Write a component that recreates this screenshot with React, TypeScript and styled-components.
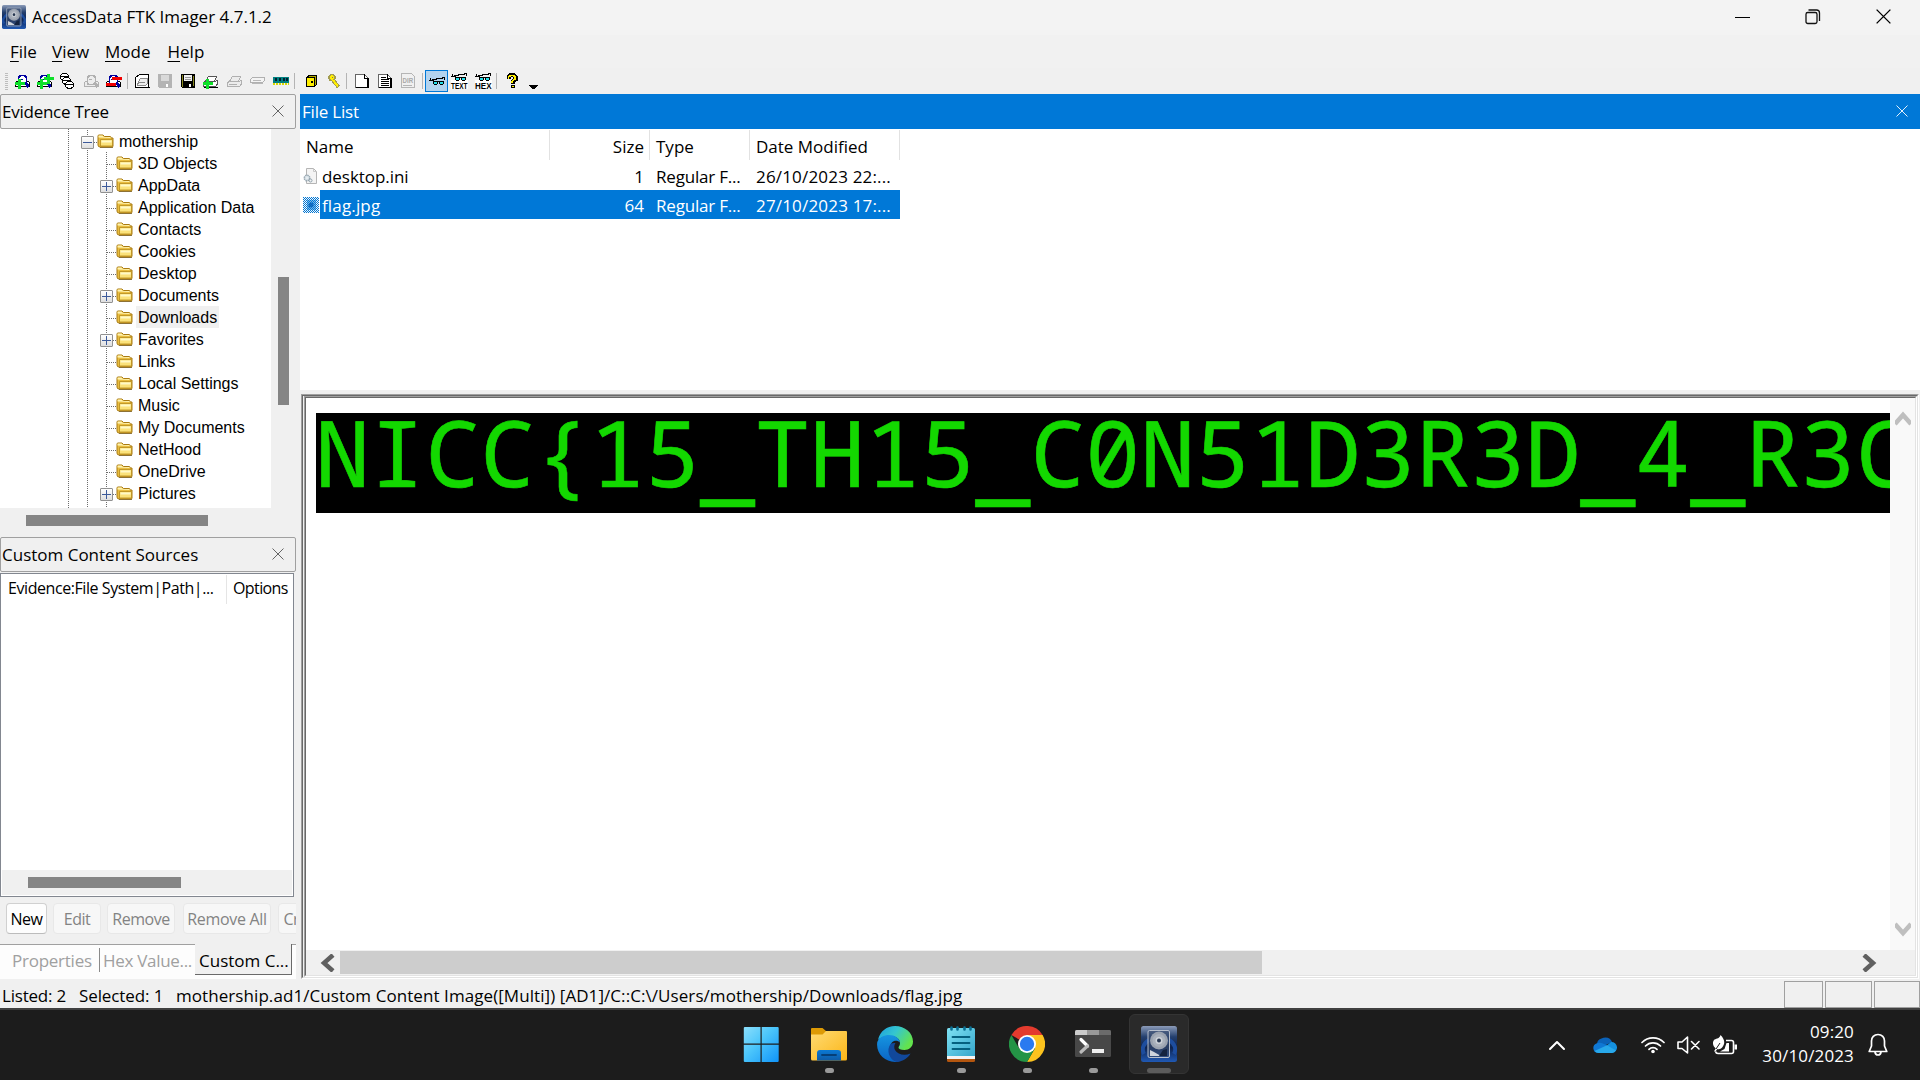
import React from 'react';
import styled, { createGlobalStyle, css } from 'styled-components';

const GlobalStyle = createGlobalStyle`
  * { box-sizing: border-box; }
  body { margin: 0; background: #f0f0f0; overflow: hidden; }
  svg { display: block; flex: none; }
`;

const ui = '"Open Sans", "Noto Sans", sans-serif';

/* ---------- window frame ---------- */

const Window = styled.div`
  width: 1920px;
  height: 1080px;
  display: flex;
  flex-direction: column;
  overflow: hidden;
  background: #f0f0f0;
  color: #000;
  font: 17px/22px ${ui};
  white-space: pre;
`;
const TitleBar = styled.header`
  height: 35px;
  flex: none;
  display: flex;
  align-items: center;
  padding: 0 2px 1px 2px;
  background: #f3f3f3;
`;
const Title = styled.span`
  flex: 1;
  margin-left: 6px;
`;
const Caption = styled.span`
  width: 70px;
  display: flex;
  justify-content: center;
  padding-bottom: 1px;
`;
const MenuBar = styled.nav`
  height: 33px;
  flex: none;
  display: flex;
  align-items: center;
  gap: 15.5px;
  padding: 0 0 0 10px;
  background: #f1f1f1;
`;
const MenuItem = styled.div<{ $w: number }>`
  width: ${p => p.$w}px;
  &::first-letter { text-decoration: underline; text-decoration-thickness: 1px; text-underline-offset: 3px; }
`;
const ToolBar = styled.div`
  height: 26px;
  flex: none;
  display: flex;
  align-items: center;
  padding-left: 5px;
`;
const Grip = styled.span`
  width: 3px;
  height: 17px;
  margin-right: 3px;
  background: repeating-linear-gradient(#bdbdbd 0 1px, #f0f0f0 1px 2px);
`;
const Tool = styled.span<{ $active?: boolean; $w?: number }>`
  width: ${p => p.$w ?? 23}px;
  height: 22px;
  display: flex;
  align-items: center;
  justify-content: center;
  padding-right: 2px;
  ${p => p.$active && css`padding: 0; background: #b3d3ee; border: 1px solid #0078d7;`}
`;
const Separator = styled.span<{ $before: number; $after: number }>`
  width: 1px;
  height: 16px;
  margin: 0 ${p => p.$after}px 0 ${p => p.$before}px;
  background: #b4b4b4;
`;

const Body = styled.main`
  height: 885px;
  flex: none;
  display: flex;
  gap: 4px;
`;
const SideColumn = styled.aside`
  width: 296px;
  flex: none;
  display: flex;
  flex-direction: column;
`;
const MainColumn = styled.section`
  flex: 1;
  min-width: 0;
  display: flex;
  flex-direction: column;
`;
const PaneHeader = styled.div<{ $active?: boolean; $gap?: number }>`
  height: 35px;
  flex: none;
  display: flex;
  align-items: center;
  justify-content: space-between;
  padding: ${p => (p.$active ? 1 : 1)}px ${p => (p.$active ? 12 : 11)}px 0 ${p => (p.$active ? 2 : 1)}px;
  margin-bottom: ${p => p.$gap ?? 0}px;
  border: ${p => (p.$active ? 'none' : '1px solid #a0a0a0')};
  border-radius: ${p => (p.$active ? 0 : 2)}px;
  background: ${p => (p.$active ? '#0078d7' : '#f0f0f0')};
  color: ${p => (p.$active ? '#fff' : '#000')};
  & > svg { margin-bottom: 2px; }
`;
const PaneTitle = styled.span<{ $track?: number }>`
  letter-spacing: ${p => p.$track ?? 0}px;
`;

/* ---------- evidence tree ---------- */

const TreePane = styled.div`
  height: 379px;
  flex: none;
  display: flex;
`;
const Tree = styled.div`
  width: 271px;
  height: 379px;
  display: flex;
  background: #fff;
  overflow: hidden;
  font: 16px/22px "Liberation Sans", Arial, sans-serif;
`;
const dots = 'repeating-linear-gradient(#6d6d6d 0 1px, transparent 1px 2px)';
const Guide = styled.span<{ $w: number }>`
  width: ${p => p.$w}px;
  flex: none;
  background: ${dots} right / 1px 100% no-repeat;
`;
const TreeItems = styled.div`
  flex: 1;
  padding-top: 1px;
`;
const TreeRow = styled.div<{ $root?: boolean }>`
  height: 22px;
  display: flex;
  align-items: center;
  padding-left: ${p => (p.$root ? 12 : 31)}px;
  background: ${dots} 18px 0 / 1px 100% no-repeat, ${p => (p.$root ? 'none' : dots)} 37px 0 / 1px 100% no-repeat;
`;
const TreeTail = styled(TreeRow)`
  height: 6px;
`;
const Expander = styled.span<{ $open?: boolean; $hidden?: boolean }>`
  width: 13px;
  height: 13px;
  margin-top: 3px;
  flex: none;
  ${p => !p.$hidden && css`
    border: 1px solid #919191;
    border-radius: 1px;
    background:
      linear-gradient(#3c5a9a, #3c5a9a) center / 9px 1px no-repeat,
      linear-gradient(#3c5a9a, #3c5a9a) center / 1px ${p.$open ? 1 : 9}px no-repeat,
      linear-gradient(#fff, #dedede);
  `}
`;
const Branch = styled.span<{ $long?: boolean }>`
  width: ${p => (p.$long ? 9 : 3)}px;
  height: 1px;
  margin-top: 2px;
  margin-left: ${p => (p.$long ? -6 : 0)}px;
  flex: none;
  background: repeating-linear-gradient(90deg, #6d6d6d 0 1px, transparent 1px 2px);
`;
const TreeLabel = styled.span<{ $selected?: boolean }>`
  height: 22px;
  margin-left: 3px;
  padding: 0 2px;
  line-height: 24px;
  background: ${p => (p.$selected ? '#f0f0f0' : 'transparent')};
`;
const SideVScroll = styled.div`
  width: 25px;
  padding: 148px 0 0 7px;
`;
const Thumb = styled.div<{ $w: number; $h: number; $light?: boolean }>`
  width: ${p => p.$w}px;
  height: ${p => p.$h}px;
  flex: none;
  background: ${p => (p.$light ? '#cdcdcd' : '#858585')};
`;
const SideHScroll = styled.div`
  height: 29px;
  flex: none;
  padding: 7px 0 0 26px;
`;

/* ---------- custom content sources ---------- */

const SourceList = styled.div`
  width: 294px;
  height: 324px;
  flex: none;
  display: flex;
  flex-direction: column;
  justify-content: space-between;
  padding: 1px;
  border: 1px solid #828790;
  background: #fff;
  font-size: 16px;
`;
const SourceHead = styled.div`
  height: 29px;
  display: grid;
  grid-template-columns: 224px 1fr;
  line-height: 26px;
`;
const SourceCol = styled.span<{ $track?: number }>`
  padding-left: 6px;
  letter-spacing: ${p => p.$track ?? 0}px;
  & + & { border-left: 1px solid #e5e5e5; }
`;
const SourceScroll = styled.div`
  height: 25px;
  padding: 7px 0 0 26px;
  background: #f0f0f0;
`;
const ButtonRow = styled.div`
  height: 47px;
  flex: none;
  display: flex;
  padding: 6px 0 0 6px;
  overflow: hidden;
  font-size: 16px;
`;
const PushButton = styled.button<{ $w: number; $gap: number; $track?: number }>`
  width: ${p => p.$w}px;
  height: 31px;
  flex: none;
  margin: 0 ${p => p.$gap}px 0 0;
  padding: 0;
  border: 1px solid #d0d0d0;
  border-bottom-color: #bcbcbc;
  border-radius: 4px;
  background: #fdfdfd;
  color: #000;
  font: inherit;
  letter-spacing: ${p => p.$track ?? -0.5}px;
  &:disabled { color: #838383; background: #f7f7f7; border-color: #e8e8e8; }
`;
const Tabs = styled.div`
  height: 35px;
  flex: none;
  display: flex;
  background: #fdfdfd;
  border-top: 1px solid #a0a0a0;
`;
const Tab = styled.span<{ $w: number; $selected?: boolean; $track?: number; $pad: number }>`
  width: ${p => p.$w}px;
  height: 30px;
  flex: none;
  padding-left: ${p => p.$pad}px;
  line-height: 32px;
  color: #a0a0a0;
  letter-spacing: ${p => p.$track ?? 0}px;
  background: linear-gradient(#8a8a8a, #8a8a8a) right 3px / 1px 24px no-repeat;
  & + & { background: none; }
  ${p => p.$selected && css`
    && { color: #000; background: #f0f0f0; height: 31px; margin-top: -1px; line-height: 34px; border: solid #696969; border-width: 0 1px 1px 0; }
  `}
`;

/* ---------- file list ---------- */

const FileTable = styled.div`
  height: 261px;
  flex: none;
  background: #fff;
  padding-top: 1px;
`;
const FileRow = styled.div<{ $head?: boolean; $selected?: boolean }>`
  width: 600px;
  height: ${p => (p.$head ? 31 : 29)}px;
  display: grid;
  grid-template-columns: 250px 100px 100px 150px;
  line-height: ${p => (p.$head ? 34 : 30)}px;
  color: ${p => (p.$selected ? '#fff' : '#000')};
  background: ${p => (p.$selected ? 'linear-gradient(#0078d7, #0078d7) 20px 0 no-repeat' : 'none')};
`;
const HeadCell = styled.span<{ $right?: boolean }>`
  padding: 0 6px;
  text-align: ${p => (p.$right ? 'right' : 'left')};
  background: linear-gradient(#e2e2e2, #e2e2e2) right 0 / 1px 30px no-repeat;
`;
const Cell = styled.span<{ $right?: boolean; $track?: number }>`
  display: flex;
  align-items: center;
  justify-content: ${p => (p.$right ? 'flex-end' : 'flex-start')};
  padding: 1px 6px 0;
  letter-spacing: ${p => p.$track ?? 0}px;
`;
const FileCell = styled(Cell)`
  gap: 3px;
  padding-left: 3px;
  & > svg { margin-bottom: 2px; }
`;

/* ---------- viewer ---------- */

const ViewerFrame = styled.div`
  flex: none;
  height: 585px;
  margin: 4px 1px 0 1px;
  border: 1px solid;
  border-color: #a0a0a0 #fff #fff #a0a0a0;
`;
const FrameInner = styled.div`
  height: 100%;
  border: 1px solid;
  border-color: #696969 #e3e3e3 #e3e3e3 #696969;
  padding-left: 1px;
`;
const FrameCore = styled.div`
  height: 100%;
  border: 1px solid;
  border-color: #a0a0a0 #fff #fff #a0a0a0;
`;
const Viewer = styled.div`
  height: 100%;
  border: 1px solid;
  border-color: #696969 #e3e3e3 #e3e3e3 #696969;
  display: flex;
  flex-direction: column;
  background: #fff;
`;
const ViewerMain = styled.div`
  flex: 1;
  min-height: 0;
  display: flex;
`;
const Canvas = styled.div`
  flex: 1;
  min-width: 0;
  padding: 15px 0 0 10px;
`;
const Picture = styled.div`
  height: 100px;
  overflow: hidden;
  background: #000;
  color: #13d800;
  font: 400 91.7px/78px "Noto Sans Mono", "DejaVu Sans Mono", monospace;
  text-indent: -1px;
  -webkit-text-stroke: 0.6px #13d800;
`;
const LowLine = styled.span`
  line-height: 0;
  vertical-align: -6px;
`;
const ViewerVScroll = styled.div`
  width: 25px;
  flex: none;
  display: flex;
  flex-direction: column;
  justify-content: space-between;
  align-items: center;
  padding: 12px 0;
  background: #f9f9f9;
`;
const ViewerHScroll = styled.div`
  height: 25px;
  flex: none;
  display: flex;
  align-items: center;
  padding: 0 38px 0 14px;
  background: #f0f0f0;
`;
const Spacer = styled.span`
  flex: 1;
`;
const ArrowSlot = styled.span`
  width: 20px;
  flex: none;
`;

/* ---------- status bar ---------- */

const StatusBar = styled.footer`
  height: 29px;
  flex: none;
  display: flex;
  gap: 2px;
  padding: 2px 0 0 2px;
  line-height: 29px;
`;
const StatusText = styled.span<{ $w?: number; $track?: number }>`
  ${p => (p.$w ? css`width: ${p.$w}px;` : css`flex: 1;`)}
  letter-spacing: ${p => p.$track ?? 0}px;
`;
const StatusCell = styled.span<{ $w: number }>`
  width: ${p => p.$w}px;
  height: 27px;
  border: 1px solid #a0a0a0;
`;

/* ---------- taskbar ---------- */

const TaskBar = styled.div`
  height: 72px;
  flex: none;
  display: flex;
  border-top: 2px solid #404040;
  background: #1c1c1c;
  color: #fff;
`;
const Apps = styled.div`
  display: flex;
  padding-left: 728px;
  width: 1548px;
`;
const AppSlot = styled.div<{ $shift?: boolean }>`
  width: 66px;
  height: 70px;
  padding: 4px 3px;
  margin-right: ${p => (p.$shift ? 2 : 0)}px;
`;
const Tile = styled.div<{ $focused?: boolean }>`
  height: 60px;
  display: flex;
  flex-direction: column;
  align-items: center;
  justify-content: space-between;
  padding-top: ${p => (p.$focused ? 11 : 12)}px;
  border-radius: 6px;
  ${p => p.$focused && css`background: #2a2a2a; border: 1px solid #343434;`}
`;
const Indicator = styled.span<{ $w: number; $dim?: boolean }>`
  width: ${p => p.$w}px;
  height: 5px;
  margin-bottom: ${p => (p.$dim ? 0 : 1)}px;
  border-radius: 3px;
  background: ${p => (p.$dim ? '#5c5c5c' : '#9a9a9a')};
`;
const Tray = styled.div`
  flex: 1;
  display: flex;
  align-items: center;
`;
const TrayIcon = styled.span<{ $gap: number }>`
  margin-right: ${p => p.$gap}px;
`;
const Clock = styled.div`
  width: 117px;
  margin: 0 14px 2px 0;
  text-align: right;
  line-height: 24px;
  letter-spacing: 0.15px;
`;

/* ---------- icons ---------- */

const Disk = ({ size }: { size: number }) => (
  <svg width={size} height={size} viewBox="0 0 36 36">
    <defs>
      <linearGradient id={`ftk${size}`} x1="0" y1="0" x2="0" y2="1">
        <stop offset="0" stopColor="#8b9bb8" /><stop offset=".3" stopColor="#24406f" />
        <stop offset=".6" stopColor="#0d2350" /><stop offset="1" stopColor="#2059b4" />
      </linearGradient>
    </defs>
    <rect width="36" height="36" rx="2.500" fill={`url(#ftk${size})`} />
    <path d="M3 28a16 12 0 0 1 5-14M33 28a16 12 0 0 0-5-14" stroke="#1d4d9e" strokeWidth="4" fill="none" />
    <rect x="7" y="4.500" width="21.500" height="27" rx="1.500" fill="#3c4e70" fillOpacity=".6" stroke="#b7bfcc" strokeWidth="1" />
    <circle cx="18" cy="14.500" r="9" fill="#9aa2af" />
    <circle cx="18" cy="14.500" r="6.500" fill="#a9b0bb" />
    <circle cx="18" cy="14.500" r="3.500" fill="#ccd1d8" />
    <circle cx="18" cy="14.500" r="2" fill="#26364f" />
    <path d="M9 30v-6l4 2 7 4z" fill="#cfd4dc" />
    <path d="M22 24l4-1v7h-8z" fill="#14233f" />
  </svg>
);

const Cross = ({ color, size }: { color: string; size: number }) => (
  <svg width={size} height={size} viewBox="0 0 12 12"><path d="M.5.5l11 11M11.500.5l-11 11" stroke={color} strokeWidth={size > 13 ? 1.1 : 0.9} fill="none" /></svg>
);

const Folder = () => (
  <svg width="17" height="16" viewBox="0 0 17 16">
    <path d="M1 5V3q0-1 1-1h4l1.500 1.500H13q1 0 1 1V5h2v8q0 1-1 1H3q-2 0-2-2z" fill="#e9bd3f" stroke="#a97b13" />
    <path d="M1.500 4.500V3q0-.5.5-.5h3.500L7 4h6.500v1" fill="#fff3b0" />
    <path d="M3.500 13V6.500h12V13z" fill="#fbe27a" stroke="#b68a1c" strokeWidth=".8" />
    <path d="M4.500 7.500h10v2h-10z" fill="#fff9c8" />
    <path d="M3 14.500h13" stroke="#7b6021" strokeWidth=".8" />
  </svg>
);

const I = ({ children, w = 16, h = 16 }: { children: React.ReactNode; w?: number; h?: number }) => (
  <svg width={w} height={h} viewBox={`0 0 ${w} ${h}`} shapeRendering="crispEdges">{children}</svg>
);

const Magnifier = ({ line, fill = '#fff' }: { line: string; fill?: string }) => (
  <>
    <path d="M1.500 13.500V9.500l3-2h8l3 2v4z" fill={fill} stroke={line === '#b0b0b0' ? line : '#000'} />
    <path d="M4.500 10.500V4.500l2-2h4l2 2v6l-1 1h-6z" fill={fill} stroke={line} strokeWidth="1.500" />
    <path d="M11.500 9.500l3 4.500" stroke={line} strokeWidth="3" />
    <path d="M6 6h3" stroke={line} />
  </>
);
const Plus = ({ x, y }: { x: number; y: number }) => <path d={`M${x} ${y - 5}v10M${x - 5} ${y}h10`} stroke="#0ee02a" strokeWidth="3" />;

const AddEvidence = () => <I><Magnifier line="#0000a0" /><Plus x={5.5} y={10.5} /></I>;
const AddAll = () => <I w={18}><Magnifier line="#0000a0" /><Plus x={5.5} y={10.5} /><Plus x={12.5} y={5.5} /></I>;
const Mount = () => (
  <I>
    {[[0, 0], [2, 4], [5, 8]].map(([x, y]) => (
      <g key={y} fill="#fff" stroke="#000">
        <path d={`M${x + 0.5} ${y + 2.5}l2-2h4l2 2v3l-2 1.500h-4l-2-1.500z`} /><path d={`M${x + 1} ${y + 3.5}h7`} />
      </g>
    ))}
  </I>
);
const Gray = () => <I><Magnifier line="#b0b0b0" fill="#ececec" /></I>;
const RemoveEvidence = () => (
  <I w={17}><Magnifier line="#0000a0" /><path d="M1 11.500h10M7 5.500h10" stroke="#f00000" strokeWidth="3" /></I>
);
const Drive = ({ c, f }: { c: string; f: string }) => (
  <>
    <path d="M3.500 8.500l3-5h8l-2 5z" fill={f} stroke={c} />
    <path d="M1.500 9.500l2-1h10l1.500-1v4l-1.500 2h-12z" fill={f} stroke={c} />
    <path d="M3 11.500h8" stroke={c} />
  </>
);
const CreateImage = () => (
  <I><path d="M1.500 14.500V4.500l4-3h9v13z" fill="#fff" stroke="#000" /><path d="M1 14.500h15M14.500 2v13" stroke="#000" />
    <path d="M4.500 8.500l2-3h7v5l-2 2h-8z" fill="#eee" stroke="#8a8a8a" /><path d="M5 9.500h6" stroke="#8a8a8a" /></I>
);
const Floppy = ({ dark }: { dark?: boolean }) => {
  const c = dark ? '#000' : '#b4b4b4';
  return (
    <I><path d="M1 1h14v14H2l-1-1z" fill={c} />
      {dark && <path d="M2 2h1v12H2zM13 3h1v10h-1z" fill="#8a8a20" />}
      <path d="M4 2h8v6H4z" fill={dark ? '#f2f2f2' : '#d9d9d9'} />
      {dark && <path d="M5 4h6M5 6h6" stroke="#999" />}
      <path d="M9 11h2v3H9z" fill="#fff" /></I>
  );
};
const AddDrive = () => <I w={17}><Drive c="#555" f="#fff" /><path d="M2 14.500h14" stroke="#000" /><Plus x={5.5} y={10.5} /></I>;
const DriveOff = () => <I><Drive c="#b0b0b0" f="#ececec" /></I>;
const Slab = () => <I><path d="M1.500 6.500l2-2h12v3l-2 2h-12z" fill="#f4f4f4" stroke="#b0b0b0" /><path d="M3 10.500h11M4 7.500h8" stroke="#b8b8b8" /></I>;
const Memory = () => (
  <I w={16} h={8}><path d="M0 0h16v6H0z" fill="#008080" />
    <path d="M2 1h2v3H2zM6 1h2v3H6zM10 1h2v3h-2zM13 1h2v3h-2z" fill="#002030" />
    <path d="M0 7h16" stroke="#d8d800" strokeWidth="2" strokeDasharray="2 1" /></I>
);
const Safe = () => (
  <I><path d="M3 4l3-2h8v10l-3 2H3z" fill="#000" /><path d="M4.500 4l2-1H13v9l-1.500 1z" fill="#b0a800" /><path d="M3.500 4.500h8v9h-8z" fill="#ffee00" stroke="#000" /><path d="M8 8h2v2H8z" fill="#000" /></I>
);
const Key = () => (
  <I><circle cx="6" cy="4.500" r="3" fill="#ffee00" stroke="#a39d50" strokeWidth="1.500" /><path d="M5.500 4h1" stroke="#777" />
    <path d="M7 7l5.500 7" stroke="#a39d50" strokeWidth="4" /><path d="M7 7l5 6.500" stroke="#ffee00" strokeWidth="2" /></I>
);
const Page = ({ lines }: { lines?: boolean }) => (
  <I><path d="M1.500 1.500h9l4 4v9h-13z" fill="#fff" stroke="#666" strokeWidth="1" /><path d="M10.500 1v4.500h4M14 5v10M2 14.500h13" stroke="#000" strokeWidth="1.500" fill="none" />
    {lines && <path d="M4 4.500h5M4 6.500h8M4 8.500h8M4 10.500h8M4 12.500h8" stroke="#000" />}</I>
);
const DirPage = () => (
  <I><path d="M1.500.5h10l3 3v11h-13z" fill="#f0f0f0" stroke="#b5b5b5" /><path d="M3 12.500h9" stroke="#b5b5b5" />
    <text x="2.600" y="10" fontSize="7" fontWeight="700" fontFamily="Liberation Sans, sans-serif" textLength="10.500" lengthAdjust="spacingAndGlyphs" fill="#a8a8a8">DIR</text></I>
);
const Glasses = ({ label }: { label?: string }) => (
  <I w={18} h={16}>
    {label && <path d="M1 7h17v9H1z" fill="#fff" />}
    <g transform={label ? 'translate(0 -4)' : undefined}>
      <path d="M1 7.500h3l3 1M2.500 5v2M4 6.500h3l4-1h3v-1.500h2v3M8 5.500h3" stroke="#000" strokeWidth="1" fill="none" />
      <path d="M5.500 8.500h4v2l-1 1h-2l-1-1zM11.500 8.500h4v2l-1 1h-2l-1-1zM9.500 8.500h2" fill="#25dfe8" stroke="#000" />
    </g>
    {label && <text x="1" y="15.500" fontSize="8.500" fontWeight="700" fontFamily="Liberation Sans, sans-serif" textLength="16.500" lengthAdjust="spacingAndGlyphs">{label}</text>}
  </I>
);
const Question = () => (
  <I><path d="M4.500 6V4l2-2h3l2 2v2.500l-3 2v2" stroke="#000" strokeWidth="4" fill="none" /><path d="M6.500 11.500h4v3h-4z" fill="#000" />
    <path d="M4.500 5.500V4l2-1.500h3L11 4v2l-3 2.500V10" stroke="#ffee00" strokeWidth="1.700" fill="none" /><path d="M7.500 12.500h2v1.500h-2z" fill="#ffee00" /></I>
);
const MoreArrow = () => <I w={10} h={16}><path d="M0 12h10l-5 5z" fill="#000" /></I>;

const IniFile = () => (
  <svg width="16" height="17" viewBox="0 0 16 17"><path d="M3.500.5h7l3 3v12h-10z" fill="#f4f4f4" stroke="#b5b5b5" /><path d="M10.500.5v3h3" fill="none" stroke="#c9c9c9" />
    <circle cx="4" cy="10" r="2.700" fill="#e5edf2" stroke="#9aa9b3" strokeWidth="1.600" strokeDasharray="1.500 .6" /><circle cx="7.500" cy="12.500" r="1.500" fill="none" stroke="#8fa0ab" /></svg>
);
const JpgFile = () => (
  <svg width="16" height="16" viewBox="0 0 16 16">
    <defs><pattern id="dither" width="2" height="2" patternUnits="userSpaceOnUse"><path d="M0 0h1v1H0zM1 1h1v1H1z" fill="#0078d7" shapeRendering="crispEdges" /></pattern></defs>
    <path d="M0 0h16v16H0z" fill="#f4f6f8" /><path d="M4 3h9v10H4z" fill="#7db8e6" /><circle cx="8" cy="8" r="2.500" fill="#1a5fae" /><path d="M0 0h16v16H0z" fill="url(#dither)" />
  </svg>
);

const arrows = { up: 'M0 13L8 4l8 9', down: 'M0 3l8 9 8-9', left: 'M13 0L4 8l9 8', right: 'M3 0l9 8-9 8' };
const Arrow = ({ dir, light }: { dir: keyof typeof arrows; light?: boolean }) => (
  <svg width="16" height="18" viewBox="0 -1 16 18"><path d={arrows[dir]} fill="none" stroke={light ? '#bfbfbf' : '#606060'} strokeWidth="4.500" /></svg>
);

const StartLogo = () => (
  <svg width="36" height="36" viewBox="0 0 36 36">
    <defs><linearGradient id="win" gradientUnits="userSpaceOnUse" x1="0" y1="0" x2="36" y2="36"><stop offset="0" stopColor="#8fe0fb" /><stop offset=".45" stopColor="#4cc6fb" /><stop offset="1" stopColor="#0f93f8" /></linearGradient></defs>
    <path d="M1.500 1H17.500v16.500H.8V1.700zM18.700 1H35l.7.7v15.800h-17zM.8 18.800h16.700V36h-16l-.7-.7zM18.700 18.800h17V35.300l-.7.7H18.700z" fill="url(#win)" />
  </svg>
);
const Explorer = () => (
  <svg width="36" height="36" viewBox="0 0 36 36">
    <defs><linearGradient id="fo" x1="0" y1="0" x2="1" y2="1"><stop offset="0" stopColor="#ffdb73" /><stop offset="1" stopColor="#fbb517" /></linearGradient>
      <linearGradient id="fb" x1="0" y1="0" x2="0" y2="1"><stop offset="0" stopColor="#0a79d4" /><stop offset="1" stopColor="#0f5ba6" /></linearGradient></defs>
    <path d="M0 3q0-1 1-1h10.500l3.500 3h20v6H0z" fill="#dd9a05" />
    <path d="M0 8.500h11.500L15 5h20q1 0 1 1v27q0 1.500-1.500 1.500h-33Q0 34.500 0 33z" fill="url(#fo)" />
    <path d="M6 34.500V27q0-3 3-3h18q3 0 3 3v7.500z" fill="url(#fb)" /><path d="M11 29h14" stroke="#053f78" strokeWidth="1.800" strokeLinecap="round" />
  </svg>
);
const Edge = () => (
  <svg width="36" height="36" viewBox="0 0 36 36">
    <defs>
      <linearGradient id="e1" x1="0" y1="0" x2="1" y2=".5"><stop offset="0" stopColor="#1b9de0" /><stop offset=".5" stopColor="#35c6cf" /><stop offset="1" stopColor="#63e34d" /></linearGradient>
      <linearGradient id="e2" x1="0" y1="0" x2="0" y2="1"><stop offset="0" stopColor="#1695e0" /><stop offset="1" stopColor="#0a63c4" /></linearGradient>
    </defs>
    <path d="M1 14C3 5 10 0 18 0c10 0 18 7 18 15.500C36 21 32 24 27.500 24c-4 0-6-1-6-2.500 0-1 1.500-1.500 1.500-4.500 0-4-4-7-9-7C8 10 3 12 1 14z" fill="url(#e1)" />
    <path d="M.3 16C2 11.500 7 9 12 9c6 0 10.500 3.500 11 7.500-3-3-9-2-9.500 3.500-.5 8 7 12.500 14 11-3 3.500-6 5-9.500 5C7.500 36-1.500 27 .3 16z" fill="url(#e2)" />
    <path d="M13.500 18C9 24 12 34 20 36c6-.5 11-4 13.500-8.500-6 2.500-13 1-15.500-3.500-1.300-2.500-.8-5 .5-7-2 0-4 0-5 1z" fill="#11489b" />
  </svg>
);
const Notepad = () => (
  <svg width="36" height="36" viewBox="0 0 36 36">
    <defs><linearGradient id="np" x1="0" y1="0" x2="1" y2="1"><stop offset="0" stopColor="#7fe2f4" /><stop offset="1" stopColor="#35a6cb" /></linearGradient></defs>
    <path d="M4 31h28v3.500q0 1.500-1.500 1.500h-25Q4 36 4 34.500z" fill="#b4560f" /><path d="M4 29h28v4H4z" fill="#f3f3f3" />
    <path d="M4 3.500Q4 2 5.500 2h25Q32 2 32 3.500V30H4z" fill="url(#np)" />
    <path d="M9.500 11h17M9.500 17h17M9.500 23h17" stroke="#05607f" strokeWidth="1.800" strokeLinecap="round" />
    <path d="M8.500 1.500v2M14.500 1.500v2M21.500 1.500v2M27.500 1.500v2" stroke="#0b6f92" strokeWidth="2.600" strokeLinecap="round" />
  </svg>
);
const Chrome = () => (
  <svg width="36" height="36" viewBox="0 0 36 36">
    <path d="M18 18L2.400 9A18 18 0 0 1 33.600 9z" fill="#e33b2e" /><path d="M18 9h15.600A18 18 0 0 1 18 36l7.800-13.500z" fill="#fcc31e" />
    <path d="M10.200 22.500L2.400 9A18 18 0 0 0 18 36l7.800-13.500z" fill="#249446" />
    <circle cx="18" cy="18" r="9" fill="#fff" /><circle cx="18" cy="18" r="7.200" fill="#2a7af0" />
  </svg>
);
const Terminal = () => (
  <svg width="36" height="36" viewBox="0 0 36 36">
    <rect y="4" width="36" height="27" rx="1.500" fill="#484848" /><path d="M0 9V5.500Q0 4 1.500 4H12v5z" fill="#ccc" /><path d="M12 4h12v5H12z" fill="#999" /><path d="M24 4h10.500Q36 4 36 5.500V9H24z" fill="#6b6b6b" />
    <path d="M6 13.500l6.500 6.500" stroke="#fff" strokeWidth="3.200" strokeLinecap="round" /><path d="M12.500 20L6 26" stroke="#bbb" strokeWidth="3.200" strokeLinecap="round" />
    <path d="M17 23h12v4H17z" fill="#f0f0f0" />
  </svg>
);

const Hidden = () => <svg width="18" height="12" viewBox="0 0 18 12"><path d="M2 10l7-7 7 7" stroke="#fff" strokeWidth="2" fill="none" strokeLinecap="round" strokeLinejoin="round" /></svg>;
const OneDrive = () => (
  <svg width="24" height="16" viewBox="0 0 24 16"><path d="M4 7a6 6 0 0 1 4.500-5.500C13-1 18 1 19 5L11 9z" fill="#0b62b8" /><path d="M5 16a5 5 0 0 1-1-9.800C8 5 11 7 14 8.500L8 16z" fill="#0f78d4" /><path d="M18 5a5.500 5.500 0 0 1 1 11l-7-6z" fill="#1490df" /><path d="M1.500 14L14 8.300l9 5.200A5 5 0 0 1 19 16H5.500Q3 16 1.500 14z" fill="#28a8ea" /></svg>
);
const Wifi = () => (
  <svg width="24" height="18" viewBox="0 0 24 18" fill="none" stroke="#fff" strokeWidth="1.700" strokeLinecap="round"><path d="M1 6.500a15.500 15.500 0 0 1 22 0M4.500 10a10.600 10.600 0 0 1 15 0M8 13.300a5.700 5.700 0 0 1 8 0" /><circle cx="12" cy="15.500" r="1.500" fill="#fff" stroke="none" /><circle cx="12" cy="15.500" r=".8" /></svg>
);
const Muted = () => (
  <svg width="24" height="18" viewBox="0 0 24 18" fill="none" stroke="#fff" strokeWidth="1.600" strokeLinejoin="round" strokeLinecap="round"><path d="M1 6h4l5.500-5v16L5 12.500H1zM14.500 5.500l7.500 7.500M22 5.500L14.500 13" /></svg>
);
const Battery = () => (
  <svg width="24" height="21" viewBox="0 0 24 21"><path d="M13 5.500h5.500q2 0 2 2v9q0 2-2 2H5q-2 0-2.500-2" fill="none" stroke="#fff" strokeWidth="1.600" /><path d="M21.500 9.500H24v5h-2.500z" fill="#fff" /><path d="M13.500 8H16v8.500H7l4.500-2.500z" fill="#fff" />
    <path d="M7.500 0c4 4 5 8 2 12-1.500 2-3.500 2.500-5 2L2 17l-.8-1 1.500-2.500C-1 10-.5 6 1.500 4.500 4 3.500 6.500 3.500 7.500 0z" fill="#fff" /><path d="M3 14l4-6" stroke="#1c1c1c" /></svg>
);
const Bell = () => (
  <svg width="20" height="24" viewBox="0 0 20 24" fill="none" stroke="#fff" strokeWidth="1.700" strokeLinejoin="round"><path d="M10 1.500c-4 0-6.500 3-6.500 6.500v5L1.200 18.500h17.600L16.500 13V8c0-3.500-2.500-6.500-6.500-6.500zM7 19c.3 2 1.500 3 3 3s2.700-1 3-3" /></svg>
);

/* ---------- data ---------- */

const folders: [string, boolean?][] = [
  ['3D Objects'], ['AppData', true], ['Application Data'], ['Contacts'], ['Cookies'], ['Desktop'],
  ['Documents', true], ['Downloads'], ['Favorites', true], ['Links'], ['Local Settings'], ['Music'],
  ['My Documents'], ['NetHood'], ['OneDrive'], ['Pictures', true],
];
const files = [
  { icon: <IniFile />, name: 'desktop.ini', size: '1', type: 'Regular F...', date: '26/10/2023 22:...', track: -0.05 },
  { icon: <JpgFile />, name: 'flag.jpg', size: '64', type: 'Regular F...', date: '27/10/2023 17:...', track: 0.15 },
];
const apps: { icon: React.ReactNode; bar?: number; focused?: boolean }[] = [
  { icon: <StartLogo /> }, { icon: <Explorer />, bar: 9 }, { icon: <Edge /> }, { icon: <Notepad />, bar: 9 },
  { icon: <Chrome />, bar: 9 }, { icon: <Terminal />, bar: 9 }, { icon: <Disk size={36} />, bar: 24, focused: true },
];
const flagText = 'NICC{15_TH15_C0N51D3R3D_4_R3C';

export default function App() {
  return (
    <Window>
      <GlobalStyle />
      <TitleBar>
        <Disk size={24} />
        <Title>AccessData FTK Imager 4.7.1.2</Title>
        <Caption><svg width="16" height="16"><path d="M0 8.500h15" stroke="#000" /></svg></Caption>
        <Caption>
          <svg width="16" height="16" viewBox="0 0 16 16" fill="none" stroke="#111" strokeWidth="1.300"><rect x="1" y="3.500" width="11" height="11" rx="1.800" /><path d="M3.500 1h8q3 0 3 3v8" /></svg>
        </Caption>
        <Caption><Cross color="#000" size={15} /></Caption>
      </TitleBar>
      <MenuBar>
        <MenuItem $w={26.5}>File</MenuItem>
        <MenuItem $w={37.5}>View</MenuItem>
        <MenuItem $w={47}>Mode</MenuItem>
        <MenuItem $w={37}>Help</MenuItem>
      </MenuBar>
      <ToolBar>
        <Grip />
        <Tool><AddEvidence /></Tool><Tool><AddAll /></Tool><Tool><Mount /></Tool><Tool><Gray /></Tool><Tool><RemoveEvidence /></Tool>
        <Separator $before={1} $after={3} />
        <Tool><CreateImage /></Tool><Tool><Floppy /></Tool><Tool><Floppy dark /></Tool><Tool><AddDrive /></Tool><Tool><DriveOff /></Tool><Tool><Slab /></Tool><Tool $w={25}><Memory /></Tool>
        <Separator $before={0} $after={5} />
        <Tool><Safe /></Tool><Tool><Key /></Tool>
        <Separator $before={0} $after={4} />
        <Tool><Page /></Tool><Tool><Page lines /></Tool><Tool><DirPage /></Tool>
        <Separator $before={2} $after={2} />
        <Tool $active><Glasses /></Tool><Tool $w={24}><Glasses label="TEXT" /></Tool><Tool><Glasses label="HEX" /></Tool>
        <Separator $before={1} $after={4} />
        <Tool><Question /></Tool><Tool $w={19}><MoreArrow /></Tool>
      </ToolBar>

      <Body>
        <SideColumn>
          <PaneHeader><PaneTitle $track={-0.25}>Evidence Tree</PaneTitle><Cross color="#555" size={12} /></PaneHeader>
          <TreePane>
            <Tree>
              <Guide $w={69} />
              <TreeItems>
                <TreeRow $root><Expander $open /><Branch /><Folder /><TreeLabel>mothership</TreeLabel></TreeRow>
                {folders.map(([name, expandable]) => (
                  <TreeRow key={name}>
                    <Expander $hidden={!expandable} /><Branch $long={!expandable} /><Folder />
                    <TreeLabel $selected={name === 'Downloads'}>{name}</TreeLabel>
                  </TreeRow>
                ))}
                <TreeTail />
              </TreeItems>
            </Tree>
            <SideVScroll><Thumb $w={11} $h={128} /></SideVScroll>
          </TreePane>
          <SideHScroll><Thumb $w={182} $h={11} /></SideHScroll>
          <PaneHeader $gap={1}><PaneTitle>Custom Content Sources</PaneTitle><Cross color="#555" size={12} /></PaneHeader>
          <SourceList>
            <SourceHead><SourceCol $track={-0.43}>Evidence:File System|Path|...</SourceCol><SourceCol $track={-0.6}>Options</SourceCol></SourceHead>
            <SourceScroll><Thumb $w={153} $h={11} /></SourceScroll>
          </SourceList>
          <ButtonRow>
            <PushButton $w={41} $gap={6}>New</PushButton>
            <PushButton disabled $w={48} $gap={6}>Edit</PushButton>
            <PushButton disabled $w={68} $gap={8}>Remove</PushButton>
            <PushButton disabled $w={88} $gap={7} $track={-0.3}>Remove All</PushButton>
            <PushButton disabled $w={57} $gap={0}>Create</PushButton>
          </ButtonRow>
          <Tabs>
            <Tab $w={100} $pad={12} $track={-0.25}>Properties</Tab>
            <Tab $w={95} $pad={3} $track={-0.3}>Hex Value...</Tab>
            <Tab $w={97} $pad={4} $selected>Custom C...</Tab>
          </Tabs>
        </SideColumn>

        <MainColumn>
          <PaneHeader $active><PaneTitle $track={-0.2}>File List</PaneTitle><Cross color="#fff" size={12} /></PaneHeader>
          <FileTable>
            <FileRow $head><HeadCell>Name</HeadCell><HeadCell $right>Size</HeadCell><HeadCell>Type</HeadCell><HeadCell>Date Modified</HeadCell></FileRow>
            {files.map(f => (
              <FileRow key={f.name} $selected={f.name === 'flag.jpg'}>
                <FileCell $track={f.track}>{f.icon}{f.name}</FileCell>
                <Cell $right>{f.size}</Cell>
                <Cell $track={-0.2}>{f.type}</Cell>
                <Cell $track={0.18}>{f.date}</Cell>
              </FileRow>
            ))}
          </FileTable>
          <ViewerFrame><FrameInner><FrameCore>
            <Viewer>
              <ViewerMain>
                <Canvas>
                  <Picture>
                    {flagText.split(/(_)/).map((part, i) => (part === '_' ? <LowLine key={i}>_</LowLine> : part))}
                  </Picture>
                </Canvas>
                <ViewerVScroll><Arrow dir="up" light /><Arrow dir="down" light /></ViewerVScroll>
              </ViewerMain>
              <ViewerHScroll>
                <ArrowSlot><Arrow dir="left" /></ArrowSlot>
                <Thumb $w={922} $h={23} $light />
                <Spacer />
                <Arrow dir="right" />
              </ViewerHScroll>
            </Viewer>
          </FrameCore></FrameInner></ViewerFrame>
        </MainColumn>
      </Body>

      <StatusBar>
        <StatusText $w={75} $track={-0.2}>Listed: 2</StatusText>
        <StatusText $w={95} $track={-0.1}>Selected: 1</StatusText>
        <StatusText $track={0.07}>{'mothership.ad1/Custom Content Image([Multi]) [AD1]/C::C:\\/Users/mothership/Downloads/flag.jpg'}</StatusText>
        <StatusCell $w={39} /><StatusCell $w={47} /><StatusCell $w={46} />
      </StatusBar>

      <TaskBar>
        <Apps>
          {apps.map((a, i) => (
            <AppSlot key={i} $shift={i === 0}>
              <Tile $focused={a.focused}>{a.icon}{a.bar && <Indicator $w={a.bar} $dim={a.focused} />}</Tile>
            </AppSlot>
          ))}
        </Apps>
        <Tray>
          <TrayIcon $gap={27}><Hidden /></TrayIcon>
          <TrayIcon $gap={24}><OneDrive /></TrayIcon>
          <TrayIcon $gap={12}><Wifi /></TrayIcon>
          <TrayIcon $gap={12}><Muted /></TrayIcon>
          <TrayIcon $gap={0}><Battery /></TrayIcon>
          <Clock><div>09:20</div><div>30/10/2023</div></Clock>
          <Bell />
        </Tray>
      </TaskBar>
    </Window>
  );
}
